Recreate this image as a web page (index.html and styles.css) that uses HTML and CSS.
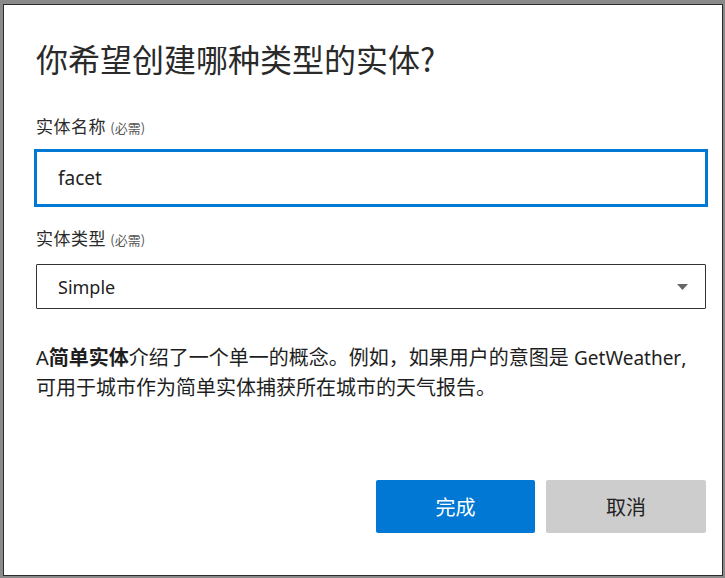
FILE: index.html
```html
<!DOCTYPE html>
<html lang="zh-CN">
<head>
<meta charset="utf-8">
<link rel="stylesheet" href="styles.css">
</head>
<body>
<div class="dialog">
  <h1 class="title">你希望创建哪种类型的实体?</h1>
  <label class="label label-first">实体名称 <span class="req">(必需)</span></label>
  <div class="input">facet</div>
  <label class="label label-second">实体类型 <span class="req">(必需)</span></label>
  <div class="select">
    <span>Simple</span>
    <svg class="caret" width="11" height="6" viewBox="0 0 11 6"><path d="M0 0 L11 0 L5.5 6 Z" fill="#666"/></svg>
  </div>
  <p class="desc"><span class="line">A<b>简单实体</b>介绍了一个单一的概念。例如，如果用户的意图是 <span class="latin">GetWeather</span>,</span><span class="line">可用于城市作为简单实体捕获所在城市的天气报告。</span></p>
  <div class="actions">
    <button class="btn btn-primary">完成</button>
    <button class="btn btn-default">取消</button>
  </div>
</div>
</body>
</html>
```

FILE: styles.css
```css
html, body {
  margin: 0;
  padding: 0;
  height: 100%;
}
body {
  background: #8a8a8a;
  padding: 4px 2px 2px 3px;
  box-sizing: border-box;
  font-family: "Noto Sans", "Noto Sans CJK SC", sans-serif;
  color: #252525;
}
.dialog {
  height: 100%;
  box-sizing: border-box;
  background: #fff;
  border: 1px solid #2c2c2c;
  display: flex;
  flex-direction: column;
  padding: 0 16px 42px 32px;
}
.title {
  margin: 33px 0 0 0;
  font-size: 32px;
  line-height: 40px;
  font-weight: 400;
  color: #2a2a2a;
  font-family: "Noto Sans CJK SC", sans-serif;
}
.label {
  display: block;
  font-size: 17px;
  line-height: 24px;
  letter-spacing: 0.5px;
  color: #2a2a2a;
  font-family: "Noto Sans CJK SC", sans-serif;
}
.label-first { margin-top: 36px; }
.label-second { margin-top: 21px; }
.req {
  font-size: 13px;
  letter-spacing: 0;
  color: #555;
}
.input {
  margin-top: 11px;
  height: 54px;
  box-sizing: border-box;
  border: 1px solid #0078d4;
  box-shadow: 0 0 0 2px #0078d4;
  padding: 0 21px;
  display: flex;
  align-items: center;
  font-size: 19px;
  color: #222;
}
.select {
  margin-top: 12px;
  height: 45px;
  box-sizing: border-box;
  border: 1px solid #333;
  border-radius: 1px;
  padding: 0 17px 0 21px;
  display: flex;
  align-items: center;
  justify-content: space-between;
  font-size: 18px;
  color: #222;
}
.desc {
  margin: 34px 0 0 0;
  font-size: 20px;
  line-height: 30px;
  color: #1e1e1e;
  font-family: "Noto Sans", "Noto Sans CJK SC", sans-serif;
}
.desc .line {
  display: block;
  white-space: nowrap;
}
.desc .latin {
  font-size: 19px;
}
.desc b { font-weight: 700; }
.actions {
  margin-top: auto;
  display: flex;
  justify-content: flex-end;
  gap: 11px;
}
.btn {
  width: 159px;
  height: 53px;
  border: none;
  border-radius: 2px;
  font-size: 20px;
  font-family: "Noto Sans CJK SC", sans-serif;
}
.btn-primary {
  background: #0078d4;
  color: #fff;
}
.btn-default {
  width: 160px;
  background: #cdcdcd;
  color: #222;
}
```
